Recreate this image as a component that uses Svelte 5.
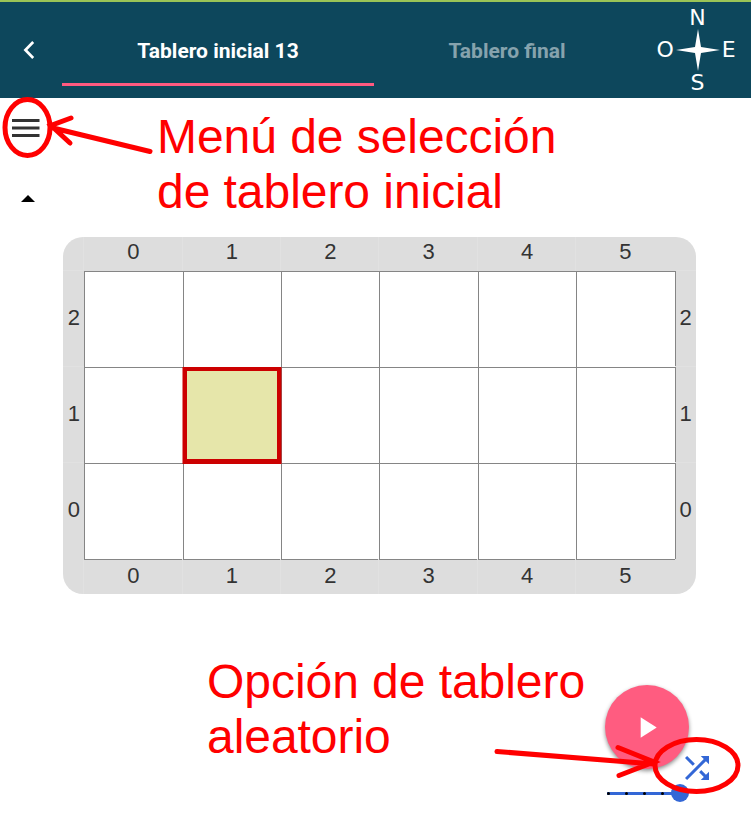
<script>
  const cols = [0, 1, 2, 3, 4, 5];
  const rows = [2, 1, 0];
  const head = { row: 1, col: 1 };
</script>

<div class="app">
  <header>
    <button class="back" aria-label="Atrás">
      <svg width="12" height="18" viewBox="0 0 12 18"><path d="M10.2 1 2.4 9l7.8 8" fill="none" stroke="#fff" stroke-width="2.7" /></svg>
    </button>
    <nav>
      <div class="tab active">Tablero inicial 13</div>
      <div class="tab second">Tablero final</div>
    </nav>
    <div class="compass">
      <span>N</span>
      <div class="middle">
        <span>O</span>
        <svg width="44" height="42" viewBox="0 0 44 42"><path d="M22 0 25 18 44 21 25 24 22 42 19 24 0 21 19 18Z" fill="#fff" /></svg>
        <span>E</span>
      </div>
      <span class="south">S</span>
    </div>
  </header>

  <main>
    <section class="top">
      <div class="side">
        <svg class="menu" width="28" height="18" viewBox="0 0 28 18"><path d="M0 1.5H27.5M0 9H27.5M0 16.5H27.5" stroke="#333" stroke-width="3" /></svg>
        <svg class="caret" width="14" height="7" viewBox="0 0 14 7"><path d="M0 7 7 0l7 7z" /></svg>
      </div>
      <p class="note">Menú de selección<br />de tablero inicial</p>
    </section>

    <div class="board">
      <div class="corner"></div>
      {#each cols as c}<div class="label">{c}</div>{/each}
      <div class="corner"></div>
      {#each rows as r}
        <div class="label side-label">{r}</div>
        {#each cols as c}
          <div class="cell" class:head={r === head.row && c === head.col}></div>
        {/each}
        <div class="label side-label right">{r}</div>
      {/each}
      <div class="corner"></div>
      {#each cols as c}<div class="label bottom">{c}</div>{/each}
      <div class="corner"></div>
    </div>

    <section class="foot">
      <p class="note">Opción de tablero<br />aleatorio</p>
      <div class="controls">
        <button class="play" aria-label="Ejecutar">
          <svg width="35" height="35" viewBox="0 0 24 24"><path d="M8 5v14l11-7z" fill="#fff" /></svg>
        </button>
        <svg class="shuffle" width="36" height="36" viewBox="0 0 24 24"><path d="M10.59 9.17 5.41 4 4 5.41l5.17 5.17 1.42-1.41zM14.5 4l2.04 2.04L4 18.59 5.41 20 17.96 7.46 20 9.5V4h-5.5zm.33 9.41-1.41 1.41 3.13 3.13L14.5 20H20v-5.5l-2.04 2.04-3.13-3.13z" fill="#3367d6" /></svg>
        <div class="slider">
          <i></i><i></i><i></i><i></i>
          <b></b>
        </div>
      </div>
    </section>
  </main>

  <svg class="marks" width="751" height="818" viewBox="0 0 751 818">
    <ellipse cx="27.5" cy="127.500" rx="22.500" ry="28" />
    <path d="M150 151.500 51 127.500M71 118 51 125.500 70 143" />
    <ellipse cx="696.500" cy="765.500" rx="41.500" ry="26" />
    <path d="M497 751.500 654 764M618 747.500 654 762 619 775.500" />
  </svg>
</div>

<style>
  :global(body) { background: #fff; }
  .app {
    position: relative;
    width: 751px;
    height: 818px;
    overflow: hidden;
    font-family: "Liberation Sans", Arial, sans-serif;
  }
  button { border: 0; padding: 0; background: none; display: flex; align-items: center; justify-content: center; }
  header {
    box-sizing: border-box;
    height: 98px;
    display: flex;
    background: #0d475c;
    border-top: 2px solid #9ac456;
  }
  .back { width: 62px; padding-right: 4px; }
  nav { display: flex; padding-bottom: 12px; }
  .tab {
    box-sizing: border-box;
    width: 312px;
    padding-top: 37px;
    border-bottom: 3px solid transparent;
    color: rgba(255, 255, 255, 0.5);
    font: bold 21px/24px Roboto, sans-serif;
    text-align: center;
  }
  .tab.active { color: #fff; border-color: #ff5a80; }
  .tab.second { width: 266px; }
  .compass {
    flex: 1;
    display: flex;
    flex-direction: column;
    align-items: center;
    padding: 4px 0 0 4px;
    color: #fff;
    font: 22px/24px "DejaVu Sans", "Noto Sans", sans-serif;
  }
  .middle { display: flex; align-items: center; gap: 2px; height: 42px; margin: -1px 3px 0 0; }
  .south { margin-top: 0; }

  .top { display: flex; height: 139px; }
  .side { width: 157px; display: flex; flex-direction: column; align-items: flex-start; }
  .menu { margin: 21px 0 0 12px; }
  .caret { margin: 58px 0 0 21px; }
  .note { margin: 0; color: #f00; font-size: 48px; letter-spacing: -0.05px; line-height: 55px; white-space: nowrap; }
  .top .note { padding-top: 11px; }

  .board {
    display: grid;
    grid-template-columns: 21px repeat(6, 98.4px) 21px;
    grid-template-rows: 34px repeat(3, 96px) 35px;
    width: 632.4px;
    margin-left: 63.3px;
    border-radius: 20px;
    background: #ddd;
    overflow: hidden;
    color: #333;
    font-size: 22px;
  }
  .label {
    box-sizing: border-box;
    display: flex;
    align-items: center;
    justify-content: center;
    padding-bottom: 4px;
    box-shadow: -1px 0 #e1e1e1;
  }
  .side-label { padding: 0 0 3px; box-shadow: 0 -1px #e1e1e1; }
  .label.bottom { padding-bottom: 3px; border-top: 1px solid #858585; }
  .label.right { border-left: 1px solid #858585; }
  .cell {
    box-sizing: border-box;
    background: #fff;
    border: solid #858585;
    border-width: 1px 0 0 1px;
  }
  .cell.head {
    position: relative;
    background: #e6e6aa;
    border: 4px solid #c00;
    box-shadow: 0 0.5px 0 0.5px #c00;
  }

  .foot { display: flex; height: 224px; }
  .foot .note { width: 398px; padding: 60px 0 0 207px; }
  .controls { position: relative; flex: 1; padding-top: 91px; }
  .play {
    width: 84px;
    height: 84px;
    border-radius: 50%;
    background: #ff5c80;
    box-shadow: 0 2px 4px rgba(0, 0, 0, 0.45);
  }
  .play svg { margin-left: -2px; }
  .shuffle { position: absolute; left: 74px; top: 156px; }
  .slider {
    position: relative;
    display: flex;
    gap: 15px;
    width: 73px;
    height: 3px;
    margin: 23px 0 0 2px;
    background: #3367d6;
  }
  .slider i { width: 3px; height: 3px; border-radius: 50%; background: #000; }
  .slider b {
    position: absolute;
    right: -9px;
    top: -8px;
    width: 18px;
    height: 18px;
    border-radius: 50%;
    background: #3367d6;
  }
  .marks { position: absolute; inset: 0; pointer-events: none; fill: none; stroke: #f00; stroke-width: 5; stroke-linecap: round; }
</style>
